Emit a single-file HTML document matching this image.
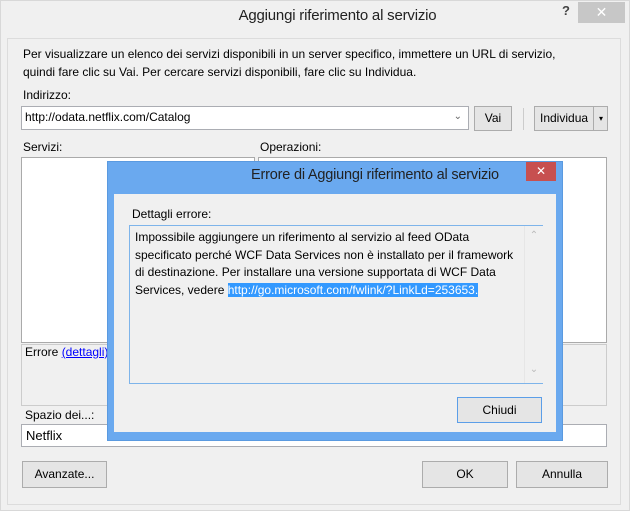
<!DOCTYPE html>
<html><head><style>
body{margin:0;width:630px;height:511px;background:#f0f0f0;font-family:"Liberation Sans",sans-serif;font-size:12px;color:#000;position:relative;overflow:hidden}
.a{position:absolute}
.btn{position:absolute;background:#e5e5e5;border:1px solid #acacac;box-sizing:border-box;text-align:center}
.box{position:absolute;background:#fff;border:1px solid #abadb3;box-sizing:border-box}
</style></head><body>
<div class="a" style="left:0;top:0;width:628px;height:509px;border:1px solid #d8d8d8"></div>
<div class="a" style="left:0;top:7px;width:630px;text-align:center;font-size:15px;letter-spacing:-0.2px;color:#222;padding-left:45px;box-sizing:border-box">Aggiungi riferimento al servizio</div>
<div class="a" style="left:562px;top:3px;font-size:13px;font-weight:bold;color:#444">?</div>
<div class="a" style="left:578px;top:2px;width:47px;height:21px;background:#c7c7c7;color:#fff;text-align:center;font-size:14px;line-height:21px">✕</div>
<div class="a" style="left:7px;top:38px;width:614px;height:467px;border:1px solid #dcdcdc;box-sizing:border-box"></div>
<div class="a" style="left:23px;top:45px;line-height:18px">Per visualizzare un elenco dei servizi disponibili in un server specifico, immettere un URL di servizio,<br>quindi fare clic su Vai. Per cercare servizi disponibili, fare clic su Individua.</div>
<div class="a" style="left:23px;top:88px">Indirizzo:</div>
<div class="box" style="left:21px;top:106px;width:448px;height:24px;padding:3px 0 0 3px">http://odata.netflix.com/Catalog<span style="position:absolute;right:6px;top:4px;color:#666;font-size:10px">⌄</span></div>
<div class="btn" style="left:474px;top:106px;width:38px;height:25px;line-height:23px">Vai</div>
<div class="a" style="left:523px;top:108px;width:1px;height:22px;background:#ccc"></div>
<div class="btn" style="left:534px;top:106px;width:74px;height:25px;line-height:23px;text-align:left;padding-left:5px">Individua<span style="position:absolute;left:58px;top:0;width:14px;height:23px;border-left:1px solid #acacac;font-size:8px;text-align:center">▾</span></div>
<div class="a" style="left:23px;top:140px">Servizi:</div>
<div class="a" style="left:260px;top:140px">Operazioni:</div>
<div class="box" style="left:21px;top:157px;width:234px;height:186px;border-color:#aaa"></div>
<div class="box" style="left:258px;top:157px;width:349px;height:186px;border-color:#aaa"></div>
<div class="a" style="left:21px;top:344px;width:586px;height:62px;border:1px solid #ccc;box-sizing:border-box;padding:0 0 0 3px">Errore <span style="color:#00f;text-decoration:underline">(dettagli)</span></div>
<div class="a" style="left:25px;top:408px">Spazio dei...:</div>
<div class="box" style="left:21px;top:424px;width:586px;height:23px;font-size:13px;padding:3px 0 0 4px">Netflix</div>
<div class="btn" style="left:22px;top:461px;width:85px;height:27px;line-height:25px">Avanzate...</div>
<div class="btn" style="left:422px;top:461px;width:86px;height:27px;line-height:25px">OK</div>
<div class="btn" style="left:516px;top:461px;width:92px;height:27px;line-height:25px">Annulla</div>
<div class="a" style="left:107px;top:161px;width:456px;height:280px;background:#6aa9ef;border:1px solid #5a9ae0;box-sizing:border-box"></div>
<div class="a" style="left:107px;top:167px;width:456px;text-align:center;font-size:14.5px;letter-spacing:-0.2px;color:#222;padding-left:80px;box-sizing:border-box">Errore di Aggiungi riferimento al servizio</div>
<div class="a" style="left:526px;top:162px;width:30px;height:19px;background:#c75050;color:#fff;text-align:center;line-height:19px;font-size:12px">✕</div>
<div class="a" style="left:114px;top:194px;width:442px;height:238px;background:#f0f0f0"></div>
<div class="a" style="left:132px;top:207px">Dettagli errore:</div>
<div class="a" style="left:129px;top:225px;width:414px;height:159px;border:1px solid #7eb4ea;box-sizing:border-box"></div>
<div class="a" style="left:524px;top:226px;width:18px;height:157px;background:#f0f0f0;border-left:1px solid #e6e6e6;color:#bbb;font-size:10px;text-align:center"><div style="margin-top:4px">⌃</div><div style="margin-top:123px">⌄</div></div>
<div class="a" style="left:135px;top:229px;width:385px;line-height:17.5px">Impossibile aggiungere un riferimento al servizio al feed OData specificato perché WCF Data Services non è installato per il framework di destinazione. Per installare una versione supportata di WCF Data Services, vedere <span style="background:#3399ff;color:#fff">http://go.microsoft.com/fwlink/?LinkLd=253653.</span></div>
<div class="btn" style="left:457px;top:397px;width:85px;height:26px;line-height:24px;border-color:#5b9ee8">Chiudi</div>
</body></html>
